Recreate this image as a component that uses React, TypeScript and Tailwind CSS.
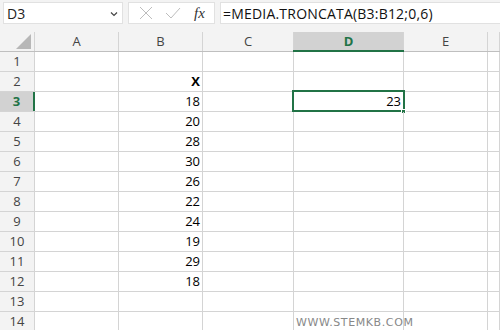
import React from 'react';

const cols = [
  { key: 'A', w: 'w-[84px]' },
  { key: 'B', w: 'w-[84px]' },
  { key: 'C', w: 'w-[91px]' },
  { key: 'D', w: 'w-[110px]' },
  { key: 'E', w: 'w-[84px]' },
  { key: 'F', w: 'flex-1' },
];

const values: Record<number, { B?: string; D?: string; bold?: boolean }> = {
  2: { B: 'X', bold: true },
  3: { B: '18', D: '23' },
  4: { B: '20' },
  5: { B: '28' },
  6: { B: '30' },
  7: { B: '26' },
  8: { B: '22' },
  9: { B: '24' },
  10: { B: '19' },
  11: { B: '29' },
  12: { B: '18' },
};

const FormulaBar: React.FC = () => (
  <div className="flex h-[32px] items-start gap-[5px] bg-[#f3f3f3] pt-[2px] pl-[3px]">
    <div className="flex h-[22px] w-[120px] items-center justify-between border border-[#e1e1e1] bg-white pl-[3px] pr-[4px] text-[14px] text-[#222]">
      <span>D3</span>
      <svg width="8" height="6" viewBox="0 0 8 6" className="mt-[1px]">
        <path d="M1 1.5 L4 4.5 L7 1.5" fill="none" stroke="#444" strokeWidth="1.2" />
      </svg>
    </div>
    <div className="flex h-[22px] w-[87px] items-center border border-[#e1e1e1] bg-white">
      <svg width="14" height="14" viewBox="0 0 14 14" className="ml-[10px]">
        <path d="M1 1 L13 13 M13 1 L1 13" stroke="#bdbdbd" strokeWidth="1" />
      </svg>
      <svg width="16" height="14" viewBox="0 0 16 14" className="ml-[12px]">
        <path d="M1 7 L6 12 L15 2" fill="none" stroke="#bdbdbd" strokeWidth="1" />
      </svg>
      <span className="ml-[13px] font-['Liberation_Serif',serif] text-[15px] italic text-[#333]">fx</span>
    </div>
    <div className="flex h-[22px] flex-1 items-center border border-[#e1e1e1] border-r-0 bg-white pl-[2px] text-[14px] tracking-[0.2px] text-[#111]">
      =MEDIA.TRONCATA(B3:B12;0,6)
    </div>
  </div>
);

const ColumnHeader: React.FC = () => (
  <div className="flex h-[20px] border-b border-[#bfbfbf] bg-[#f3f3f3]">
    <div className="relative w-[35px] border-r border-[#d4d4d4]">
      <div className="absolute right-[3px] bottom-[2px] h-0 w-0 border-b-[15px] border-l-[15px] border-b-[#b7b7b7] border-l-transparent" />
    </div>
    {cols.map((c) => (
      <div
        key={c.key}
        className={`${c.w} relative flex items-center justify-center border-r border-[#d4d4d4] text-[13px] ${
          c.key === 'D' ? 'bg-[#d2d2d2] font-bold text-[#217346]' : 'text-[#444]'
        }`}
      >
        {c.key === 'F' ? '' : c.key}
        {c.key === 'D' && <div className="absolute right-[-1px] bottom-[-1px] left-[-1px] h-[2px] bg-[#217346]" />}
      </div>
    ))}
  </div>
);

const Row: React.FC<{ n: number }> = ({ n }) => {
  const v = values[n] || {};
  const active = n === 3;
  return (
    <div className="flex h-[20px] border-b border-[#d4d4d4]">
      <div
        className={`relative flex w-[35px] items-center justify-center border-r text-[13px] ${
          active ? 'border-[#217346] border-r-2 bg-[#d2d2d2] font-bold text-[#217346]' : 'border-[#d4d4d4] bg-[#f3f3f3] text-[#444]'
        }`}
      >
        {n}
      </div>
      {cols.map((c) => {
        const text = c.key === 'B' ? v.B : c.key === 'D' ? v.D : undefined;
        const selected = active && c.key === 'D';
        return (
          <div
            key={c.key}
            className={`${c.w} relative flex items-center justify-end border-r border-[#d4d4d4] pr-[2px] text-[13px] text-black ${
              v.bold && c.key === 'B' ? 'font-bold' : ''
            }`}
          >
            {text}
            {selected && (
              <>
                <div className="absolute top-[-2px] right-[-2px] bottom-[-1px] left-[-2px] border-2 border-[#217346]" />
                <div className="absolute right-[-3px] bottom-[-3px] h-[5px] w-[5px] border border-white bg-[#217346]" />
              </>
            )}
          </div>
        );
      })}
    </div>
  );
};

export default function App() {
  return (
    <div className="relative h-[330px] w-[500px] overflow-hidden bg-white font-['Open_Sans',sans-serif]">
      <FormulaBar />
      <ColumnHeader />
      {Array.from({ length: 14 }, (_, i) => (
        <Row key={i + 1} n={i + 1} />
      ))}
      <div className="absolute top-[315px] left-[296px] font-['DejaVu_Sans',sans-serif] text-[11px] tracking-[0.6px] text-[#888]">
        WWW.STEMKB.COM
      </div>
    </div>
  );
}
